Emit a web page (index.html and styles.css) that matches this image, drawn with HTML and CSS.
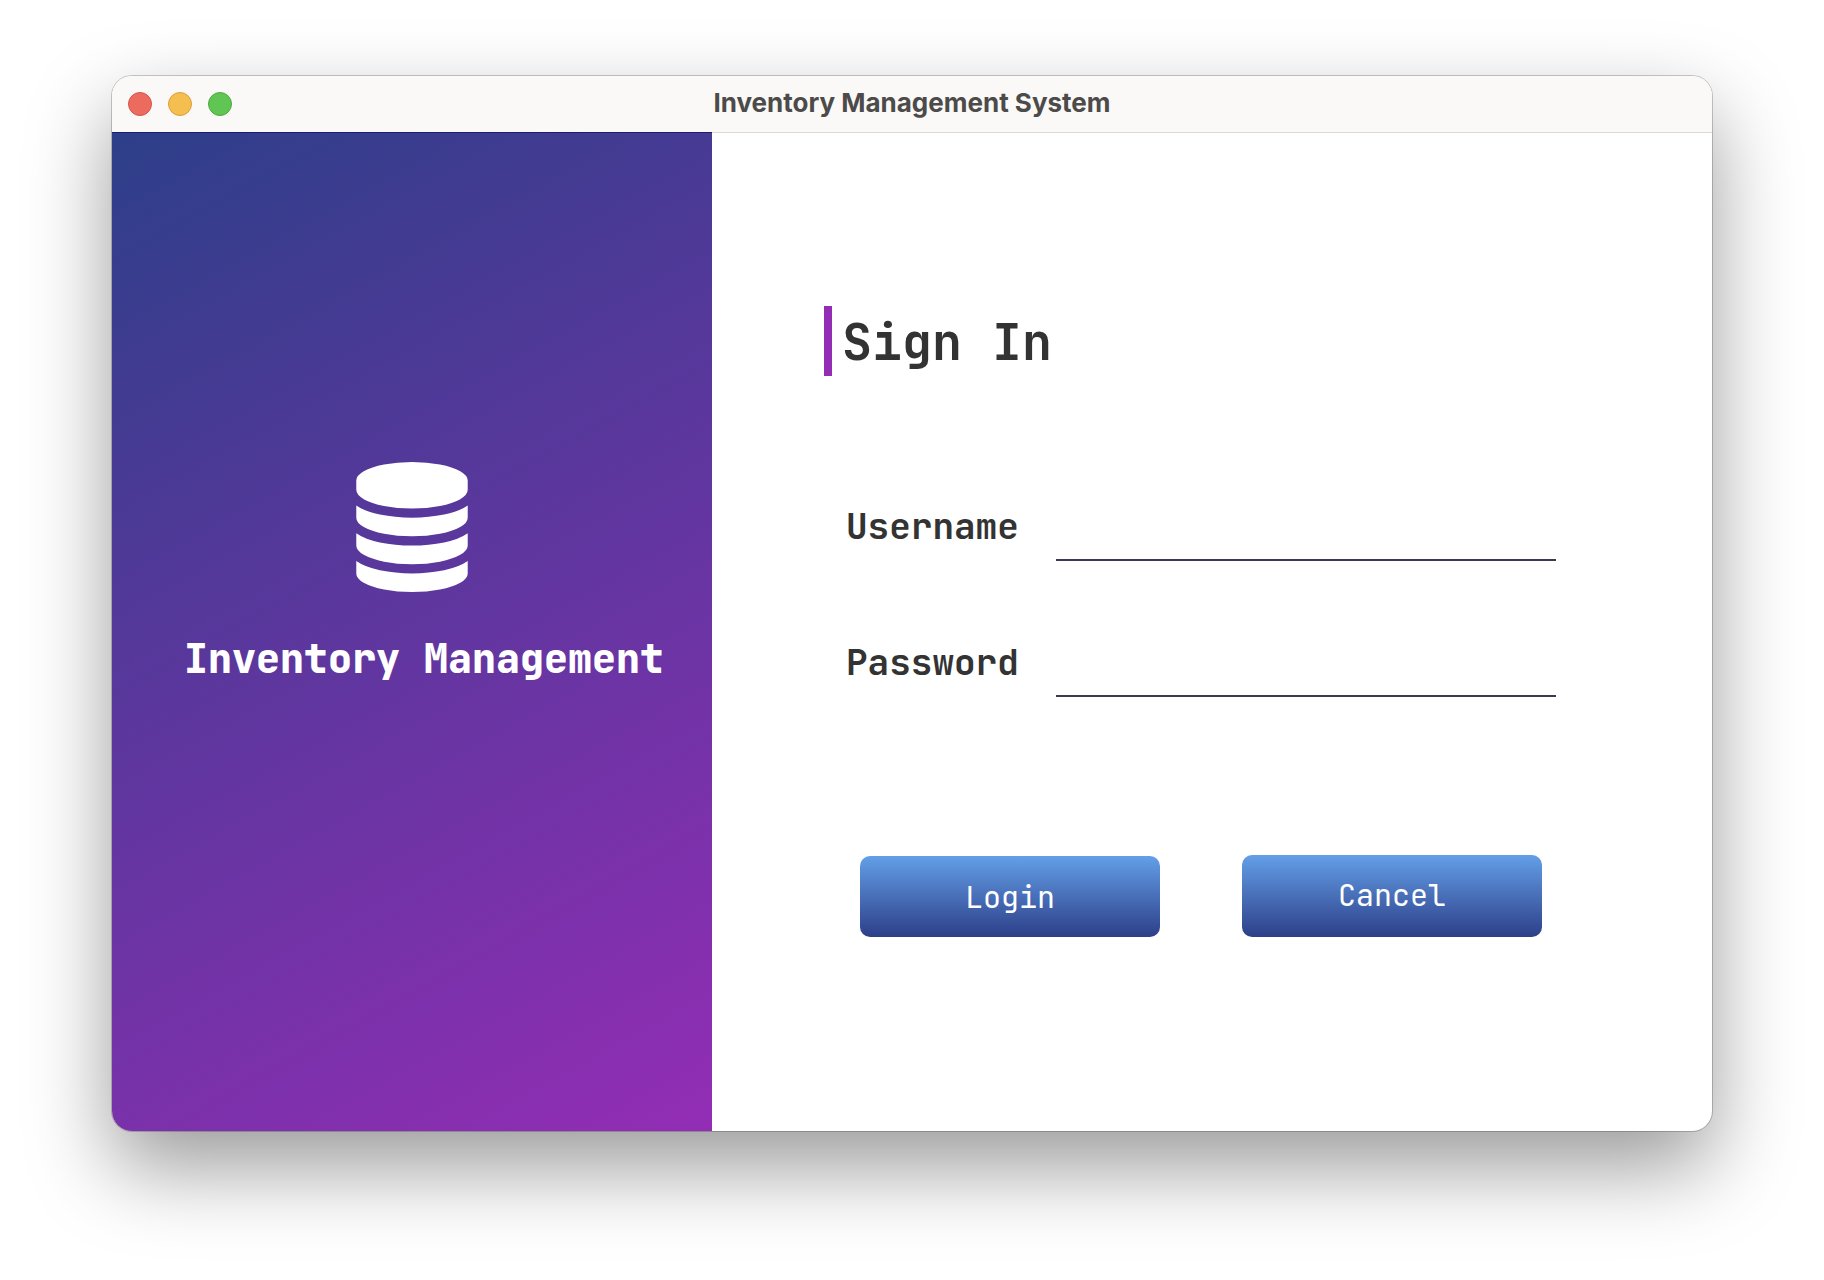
FILE: index.html
```html
<!DOCTYPE html>
<html lang="en">
<head>
<meta charset="utf-8">
<title>Inventory Management System</title>
<link rel="stylesheet" href="styles.css">
</head>
<body>
<div class="window">
  <header class="titlebar">
    <div class="controls">
      <button class="dot dot-close" aria-label="Close"></button>
      <button class="dot dot-minimize" aria-label="Minimize"></button>
      <button class="dot dot-zoom" aria-label="Zoom"></button>
    </div>
    <div class="window-title">Inventory Management System</div>
  </header>
  <div class="content">
    <aside class="brand">
      <svg class="brand-icon" viewBox="0 0 1536 1792" aria-hidden="true"><path fill="currentColor" d="M768 768q237 0 443-43t325-127v170q0 69-103 128t-280 93.5-385 34.5-385-34.5-280-93.5-103-128v-170q119 84 325 127t443 43zm0 768q237 0 443-43t325-127v170q0 69-103 128t-280 93.5-385 34.5-385-34.5-280-93.5-103-128v-170q119 84 325 127t443 43zm0-384q237 0 443-43t325-127v170q0 69-103 128t-280 93.5-385 34.5-385-34.5-280-93.5-103-128v-170q119 84 325 127t443 43zm0-1152q208 0 385 34.5t280 93.5 103 128v128q0 69-103 128t-280 93.5-385 34.5-385-34.5-280-93.5-103-128v-128q0-69 103-128t280-93.5 385-34.5z"/></svg>
      <p class="brand-name">Inventory Management</p>
    </aside>
    <main class="panel">
      <form class="signin">
        <h1 class="heading">Sign In</h1>
        <div class="fields">
          <div class="field">
            <label class="label" for="username">Username</label>
            <input class="input" id="username" type="text">
          </div>
          <div class="field">
            <label class="label" for="password">Password</label>
            <input class="input" id="password" type="password">
          </div>
        </div>
        <div class="actions">
          <button class="button button-login" type="submit">Login</button>
          <button class="button" type="button">Cancel</button>
        </div>
      </form>
    </main>
  </div>
</div>
</body>
</html>
```
FILE: styles.css
```css
* {
  box-sizing: border-box;
}

body {
  margin: 0;
  min-height: 100vh;
  padding: 76px 112px 149px;
  display: flex;
  background: #fff;
  color: #333;
  font-family: "JetBrains Mono", "DejaVu Sans Mono", monospace;
}

.window {
  flex: 1;
  display: flex;
  flex-direction: column;
  overflow: hidden;
  border-radius: 20px;
  background: #fff;
  box-shadow: 0 0 0 1px rgba(0, 0, 0, 0.2), 0 36px 84px rgba(0, 0, 0, 0.4);
}

.titlebar {
  display: grid;
  grid-template-columns: 1fr auto 1fr;
  align-items: center;
  height: 57px;
  padding: 0 16px;
  background: #faf9f7;
  border-bottom: 1px solid #d9d9d8;
}

.controls {
  display: flex;
  gap: 16px;
}

.dot {
  width: 24px;
  height: 24px;
  padding: 0;
  border: 1px solid;
  border-radius: 50%;
}

.dot-close {
  background: #ec6a5e;
  border-color: #d5544a;
}

.dot-minimize {
  background: #f4bf4f;
  border-color: #d9a03c;
}

.dot-zoom {
  background: #61c554;
  border-color: #4caa3f;
}

.window-title {
  padding-bottom: 2px;
  color: #4c4b4a;
  font: bold 26px/32px Inter, sans-serif;
}

.content {
  flex: 1;
  display: flex;
}

.brand {
  flex: 0 0 600px;
  display: flex;
  flex-direction: column;
  align-items: center;
  padding-top: 329px;
  background: linear-gradient(151deg, #2d3f89, #932db5);
  border-top: 1px solid #1c1c70;
  margin-top: -1px;
  color: #fff;
}

.brand-icon {
  width: 112px;
  height: 130px;
}

.brand-name {
  margin: 40px 0 0 24px;
  font-size: 40px;
  line-height: 54px;
  font-weight: 800;
}

.panel {
  flex: 1;
  padding: 173px 112px 0;
}

.signin {
  display: flex;
  flex-direction: column;
}

.heading {
  margin: 0;
  padding: 2px 0 0 10px;
  border-left: 8px solid #932db5;
  font-size: 50px;
  line-height: 68px;
}

.fields {
  display: grid;
  gap: 73px;
  padding: 122px 44px 0 22px;
}

.field {
  display: flex;
  align-items: flex-start;
  justify-content: space-between;
  gap: 32px;
}

.label {
  padding-top: 4px;
  font-size: 36px;
  line-height: 48px;
  font-weight: bold;
}

.input {
  flex: 0 1 500px;
  min-width: 0;
  height: 63px;
  padding: 0 8px;
  border: 0;
  border-bottom: 2px solid #3e3852;
  background: none;
  font: inherit;
  font-size: 30px;
  outline: none;
}

.actions {
  display: flex;
  justify-content: space-between;
  padding: 158px 58px 0 36px;
}

.button {
  width: 300px;
  height: 82px;
  padding: 0 0 2px;
  border: 0;
  border-radius: 10px;
  background: linear-gradient(#639fe7, #2d3f89);
  color: #fff;
  font: inherit;
  font-size: 30px;
}

.button-login {
  height: 81px;
  margin-top: 1px;
  padding: 0;
}
```
